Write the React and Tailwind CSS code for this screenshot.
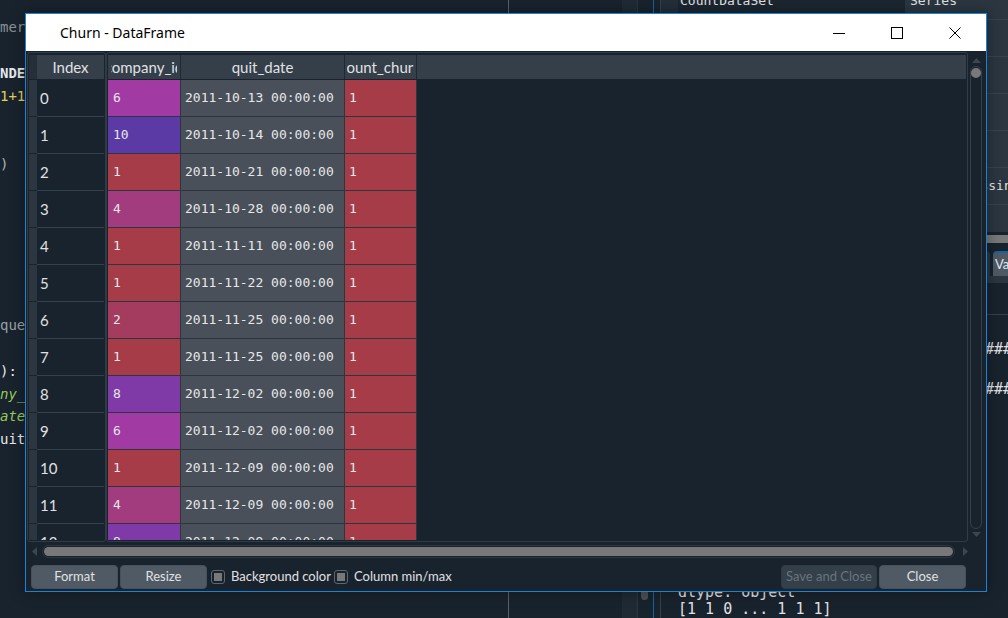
import React from "react";

const companyBg = {
  1: "bg-[#a53c47]",
  2: "bg-[#a43c5f]",
  4: "bg-[#a33c7f]",
  6: "bg-[#a23aa4]",
  8: "bg-[#7f3aa8]",
  10: "bg-[#5b3aa6]",
};

const rows = [
  [6, "2011-10-13"],
  [10, "2011-10-14"],
  [1, "2011-10-21"],
  [4, "2011-10-28"],
  [1, "2011-11-11"],
  [1, "2011-11-22"],
  [2, "2011-11-25"],
  [1, "2011-11-25"],
  [8, "2011-12-02"],
  [6, "2011-12-02"],
  [1, "2011-12-09"],
  [4, "2011-12-09"],
  [8, "2011-12-09"],
];

const codeLines = [
  { t: "mers that quit per company", cls: "text-[#8a9197]" },
  { t: "" },
  { t: "NDEX = pd.date_range(start, end)", cls: "font-bold text-[#e6e8ea]" },
  { t: "1+1)", cls: "text-[#e2cf5c]" },
  { t: "" },
  { t: "" },
  { t: ")", cls: "text-[#aeb3b7]" },
  { t: "" },
  { t: "" },
  { t: "" },
  { t: "" },
  { t: "" },
  { t: "" },
  { t: "quer the dataframe", cls: "text-[#9aa0a5]" },
  { t: "" },
  { t: "):", cls: "text-[#e6e8ea]" },
  { t: "ny_id", cls: "italic text-[#97c95c]" },
  { t: "ate", cls: "italic text-[#97c95c]" },
  { t: "uit_date", cls: "text-[#e6e8ea]" },
];

const varRows = [
  ["CountDataSet", "Series"],
  ["company_ids", "list"],
  ["df", "DataFrame"],
  ["df_churn", "DataFrame"],
  ["headcount", "DataFrame"],
  ["missing", "tuple, missing"],
  ["quit", "Series"],
];

function Editor() {
  return (
    <div className="flex w-[622px] shrink-0">
      <div className="w-[509px] shrink-0 overflow-hidden whitespace-pre border-r border-[#5a6068] pt-[16px] font-['DejaVu_Sans_Mono',monospace] text-[14px] leading-[22.9px]">
        {codeLines.map((l, i) => (
          <div key={i} className={l.cls}>{l.t || " "}</div>
        ))}
      </div>
      <div className="flex-1" />
    </div>
  );
}

function EditorScroll() {
  return (
    <div className="flex w-[31px] shrink-0">
      <div className="w-[15px] bg-[#1f2a34]" />
      <div className="w-px bg-[#2b3640]" />
      <div className="flex-1 pl-[3px] pt-[587px]">
        <div className="h-[13px] w-[7px] rounded-full bg-[#4b5058]" />
      </div>
    </div>
  );
}

function RightPane() {
  return (
    <div className="flex flex-1 flex-col pl-[6px]">
      <div className="flex h-full flex-col border-l border-[#32414b] font-['DejaVu_Sans_Mono',monospace] text-[#e0e1e3]">
        {/* variable explorer */}
        <div className="h-[236px] overflow-hidden">
          <div className="-mt-[17px]">
            {varRows.map(([name, type], i) => (
              <div key={i} className="flex h-[37px] border-b border-[#37434d] text-[13px]">
                <div className="w-[17px] bg-[#232e38]" />
                <div className="flex w-[227px] items-center bg-[#1c2630] pl-[2px]">{name}</div>
                <div className="flex flex-1 items-center whitespace-nowrap bg-[#2b3640] pl-[5px]">{type}</div>
              </div>
            ))}
          </div>
        </div>
        <div className="h-[14px] pt-[3px]">
          <div className="h-[8px] rounded-full bg-[#787878]" />
        </div>
        {/* tabs */}
        <div className="flex h-[30px] items-start pt-[5px] font-['Lato',sans-serif] text-[13px]">
          <div className="w-[219px] shrink-0" />
          <div className="flex h-[25px] w-[110px] shrink-0 items-center justify-center rounded-t-[4px] bg-[#2b3640] text-[#9da9b5]">Help</div>
          <div className="ml-[3px] flex h-[25px] w-[130px] shrink-0 items-center rounded-t-[4px] border-t-2 border-[#1464a0] bg-[#505a64] pl-[2px] text-[#dfe9f3]">Variable explorer</div>
        </div>
        <div className="h-[7px] bg-[#2b3640]" />
        {/* console */}
        <div className="flex flex-col pl-[17px] text-[15px]">
          <div className="-ml-[17px] mt-[31px] h-px bg-[#32414b]" />
          <div className="mt-[24px] whitespace-nowrap leading-[20px]">{"#".repeat(48)}</div>
          <div className="whitespace-nowrap leading-[20px]">{"# churn per company"}</div>
          <div className="whitespace-nowrap leading-[20px]">{"#".repeat(48)}</div>
          <div className="mt-[185px] whitespace-nowrap leading-[17px]">dtype: object</div>
          <div className="whitespace-nowrap leading-[17px]">[1 1 0 ... 1 1 1]</div>
        </div>
      </div>
    </div>
  );
}

function TitleBar() {
  return (
    <div className="flex h-[37px] shrink-0 items-center bg-white">
      <span className="pl-[34px] font-['Noto_Sans',sans-serif] text-[14px] text-black">Churn - DataFrame</span>
      <div className="ml-auto mr-[2px] flex h-full">
        <div className="flex w-[58px] items-center justify-center">
          <svg width="12" height="12" viewBox="0 0 12 12">
            <line x1="0" y1="6.5" x2="12" y2="6.5" stroke="#000" strokeWidth="1" />
          </svg>
        </div>
        <div className="flex w-[58px] items-center justify-center">
          <svg width="12" height="12" viewBox="0 0 12 12">
            <rect x="0.5" y="0.5" width="11" height="11" fill="none" stroke="#000" strokeWidth="1" />
          </svg>
        </div>
        <div className="flex w-[58px] items-center justify-center">
          <svg width="12" height="12" viewBox="0 0 12 12">
            <path d="M0.5 0.5 L11.5 11.5 M11.5 0.5 L0.5 11.5" stroke="#000" strokeWidth="1" />
          </svg>
        </div>
      </div>
    </div>
  );
}

function IndexView() {
  return (
    <div className="flex w-[79px] shrink-0 flex-col overflow-hidden rounded-[3px] border border-[#2f3b45] p-px">
      <div className="mt-px flex h-[24px] shrink-0">
        <div className="w-[8px] bg-[#242f39]" />
        <div className="flex w-[67px] items-center justify-center bg-[#343f4a] text-[15px] text-[#e0e1e3]">Index</div>
      </div>
      <div className="mt-px flex-1 overflow-hidden">
        {rows.map((_, i) => (
          <div key={i} className="flex h-[37px]">
            <div className="w-[8px] border-b border-[#19232d] bg-[#2b3640]" />
            <div className="flex w-[67px] items-center border-b border-[#32414b] pl-[3px] text-[15px] text-[#e0e1e3]">{i}</div>
          </div>
        ))}
      </div>
    </div>
  );
}

function HeaderCell({ w, pad, children }) {
  return (
    <div className={`flex ${w} ${pad} items-center border-r border-[#1f2933]`}>
      <div className="flex w-full justify-center overflow-hidden whitespace-nowrap">
        <span className="shrink-0">{children}</span>
      </div>
    </div>
  );
}

function DataView() {
  return (
    <div className="flex w-[862px] shrink-0 flex-col overflow-hidden rounded-[3px] border border-[#2f3b45] p-px">
      <div className="mt-px flex h-[24px] shrink-0 bg-[#343f4a] text-[15px] text-[#e0e1e3]">
        <HeaderCell w="w-[73px]" pad="px-[3px]">company_id</HeaderCell>
        <HeaderCell w="w-[164px]" pad="px-[4px]">quit_date</HeaderCell>
        <HeaderCell w="w-[72px]" pad="px-[2px]">count_churn</HeaderCell>
        <div className="flex-1" />
      </div>
      <div className="mt-px flex-1 overflow-hidden font-['DejaVu_Sans_Mono',monospace] text-[13px] text-[#e6e7e9]">
        {rows.map(([c, d], i) => (
          <div key={i} className="flex h-[37px]">
            <div className={`flex w-[73px] items-center border-b border-r border-[#2c3640] pl-[5px] ${companyBg[c]}`}>{c}</div>
            <div className="flex w-[164px] items-center whitespace-nowrap border-b border-r border-[#2c3640] bg-[#4a5059] pl-[4px]">{d} 00:00:00</div>
            <div className="flex w-[72px] items-center border-b border-r border-[#2c3640] bg-[#a53c47] pl-[4px]">1</div>
          </div>
        ))}
      </div>
    </div>
  );
}

function VScroll() {
  return (
    <div className="flex w-[16px] shrink-0 flex-col items-center pb-[5px] pt-[6px]">
      <svg width="9" height="5" viewBox="0 0 9 5">
        <path d="M0 5 L4.5 0 L9 5Z" fill="#3a4650" />
      </svg>
      <div className="mt-[3px] flex w-[12px] flex-1 justify-center rounded-full border border-[#32414b] pt-px">
        <div className="h-[10px] w-[10px] rounded-full bg-[#787878]" />
      </div>
      <svg className="mt-[3px]" width="9" height="5" viewBox="0 0 9 5">
        <path d="M0 0 L4.5 5 L9 0Z" fill="#3a4650" />
      </svg>
    </div>
  );
}

function HScroll() {
  return (
    <div className="mt-[2px] flex h-[15px] items-center pl-[6px] pr-[18px]">
      <svg width="5" height="9" viewBox="0 0 5 9">
        <path d="M5 0 L0 4.5 L5 9Z" fill="#3a4650" />
      </svg>
      <div className="ml-[5px] flex h-[13px] flex-1 items-center rounded-full border border-[#2c3640] px-px">
        <div className="h-[9px] flex-1 rounded-full bg-[#787878]" />
      </div>
      <svg className="ml-[8px]" width="5" height="9" viewBox="0 0 5 9">
        <path d="M0 0 L5 4.5 L0 9Z" fill="#3a4650" />
      </svg>
    </div>
  );
}

function CheckBox({ label, w }) {
  return (
    <div className={`flex items-center ${w}`}>
      <div className="flex h-[14px] w-[14px] shrink-0 items-center justify-center rounded-[3px] border border-[#5b6670]">
        <div className="h-[8px] w-[8px] bg-[#787878]" />
      </div>
      <span className="ml-[6px] whitespace-nowrap text-[13px] text-[#e0e1e3]">{label}</span>
    </div>
  );
}

function ButtonRow() {
  const btn = "flex h-[24px] shrink-0 items-center justify-center rounded-[4px] border text-[13px]";
  return (
    <div className="mt-[6px] flex h-[24px] items-center pl-[5px] pr-[20px]">
      <div className={`${btn} w-[87px] border-[#46515b] bg-[#505a64] text-[#e0e1e3]`}>Format</div>
      <div className={`${btn} ml-[2px] w-[87px] border-[#46515b] bg-[#505a64] text-[#e0e1e3]`}>Resize</div>
      <div className="ml-[4px]">
        <CheckBox label="Background color" w="w-[123px]" />
      </div>
      <CheckBox label="Column min/max" w="" />
      <div className="flex-1" />
      <div className={`${btn} w-[96px] border-[#2f3a44] bg-[#333f49] text-[#6b747d]`}>Save and Close</div>
      <div className={`${btn} ml-[2px] w-[87px] border-[#46515b] bg-[#505a64] text-[#e0e1e3]`}>Close</div>
    </div>
  );
}

function Dialog() {
  return (
    <div className="absolute left-[25px] top-[13px] flex h-[579px] w-[962px] flex-col border border-[#1883d7] bg-[#19232d] font-['Lato',sans-serif] shadow-[0_0_14px_rgba(0,0,0,0.35)]">
      <TitleBar />
      <div className="flex flex-1 flex-col pt-px">
        <div className="flex h-[490px]">
          <div className="ml-px flex w-[941px] shrink-0">
            <IndexView />
            <DataView />
          </div>
          <VScroll />
        </div>
        <HScroll />
        <ButtonRow />
      </div>
    </div>
  );
}

export default function App() {
  return (
    <div className="relative h-[618px] w-[1008px] overflow-hidden bg-[#19232d] font-['Noto_Sans',sans-serif]">
      <div className="flex h-full">
        <Editor />
        <EditorScroll />
        <div className="w-px shrink-0 bg-[#1464a0]" />
        <RightPane />
      </div>
      <Dialog />
    </div>
  );
}
